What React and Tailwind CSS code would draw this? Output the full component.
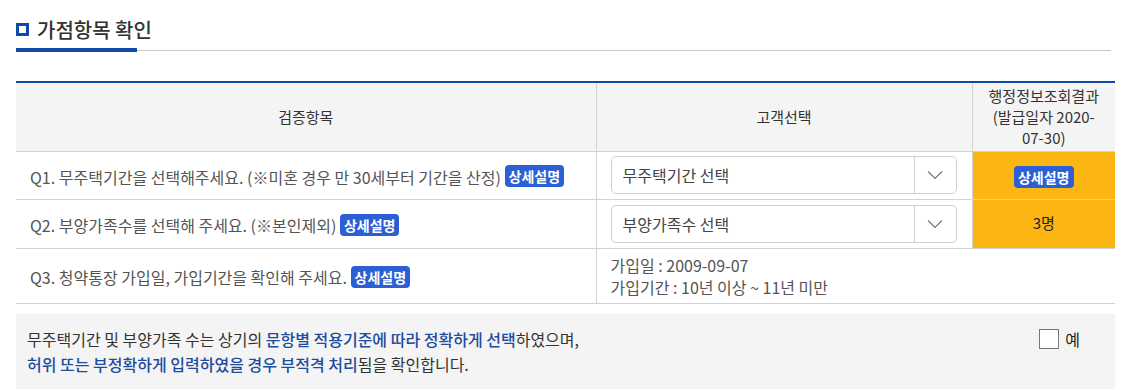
import React from 'react';

const font = { fontFamily: '"Noto Sans CJK KR", "Noto Sans", sans-serif' };

const Badge = () => (
  <span className="inline-flex items-center h-[22px] px-[4px] rounded-[4px] bg-[#2b5fd3] text-white text-[14px] font-bold leading-none align-middle">
    상세설명
  </span>
);

const ChevronDown = () => (
  <svg width="16" height="10" viewBox="0 0 16 10" fill="none">
    <path d="M1 1.5 L8 8.5 L15 1.5" stroke="#777" strokeWidth="1.2" />
  </svg>
);

const SelectBox = ({ label }) => (
  <div className="flex items-center h-[38px] w-[346px] border border-[#cfcfcf] rounded-[5px] bg-white">
    <span className="flex-1 pl-[11px] text-[16px] text-[#444]">{label}</span>
    <span className="flex items-center justify-center w-[42px] h-full border-l border-[#cfcfcf]">
      <ChevronDown />
    </span>
  </div>
);

const Blue = ({ children }) => <span className="text-[#1d4c9f] font-medium">{children}</span>;

export default function App() {
  return (
    <div className="bg-white w-[1127px] h-[390px] overflow-hidden px-4 text-[#555]" style={font}>
      {/* 제목 */}
      <div className="flex items-center gap-[8px] pt-[15px] h-[44px]">
        <span className="w-[13px] h-[13px] border-[3px] border-[#0d4aa9]" />
        <h2 className="text-[20px] font-medium text-[#333] leading-none">가점항목 확인</h2>
      </div>
      <div className="flex items-center h-[4px] mt-[4px]">
        <div className="w-[121px] h-[4px] bg-[#0d4aa9]" />
        <div className="flex-1 h-px bg-[#c8c8c8]" />
      </div>

      {/* 표 */}
      <table className="mt-[29px] w-[1099px] border-collapse border-t-2 border-[#0d4aa9] text-[16px] table-fixed">
        <colgroup>
          <col className="w-[580px]" />
          <col className="w-[376px]" />
          <col className="w-[143px]" />
        </colgroup>
        <thead>
          <tr className="bg-[#f4f4f4] h-[69px] text-[#333] text-[15px]">
            <th className="font-normal border-r border-b border-[#d2d2d2]">검증항목</th>
            <th className="font-normal border-r border-b border-[#d2d2d2]">고객선택</th>
            <th className="font-normal border-b border-[#d2d2d2] leading-[21px] px-[10px]">
              행정정보조회결과 (발급일자 2020-07-30)
            </th>
          </tr>
        </thead>
        <tbody>
          <tr className="h-[48px]">
            <td className="pl-[14px] border-r border-b border-[#d2d2d2]">
              <span className="align-middle">Q1. 무주택기간을 선택해주세요. (※미혼 경우 만 30세부터 기간을 산정)</span>{' '}
              <Badge />
            </td>
            <td className="pl-[14px] border-r border-b border-[#d2d2d2]">
              <SelectBox label="무주택기간 선택" />
            </td>
            <td className="bg-[#fbb614] border-b border-[#d2d2d2] text-center">
              <Badge />
            </td>
          </tr>
          <tr className="h-[49px]">
            <td className="pl-[14px] border-r border-b border-[#d2d2d2]">
              <span className="align-middle">Q2. 부양가족수를 선택해 주세요. (※본인제외)</span> <Badge />
            </td>
            <td className="pl-[14px] border-r border-b border-[#d2d2d2]">
              <SelectBox label="부양가족수 선택" />
            </td>
            <td className="bg-[#fbb614] border-b border-[#d2d2d2] text-center text-[#222] text-[15px]">3명</td>
          </tr>
          <tr className="h-[55px]">
            <td className="pl-[14px] border-r border-b border-[#d2d2d2]">
              <span className="align-middle">Q3. 청약통장 가입일, 가입기간을 확인해 주세요.</span> <Badge />
            </td>
            <td colSpan={2} className="pl-[14px] border-b border-[#d2d2d2] leading-[22px]">
              <div>가입일 : 2009-09-07</div>
              <div>가입기간 : 10년 이상 ~ 11년 미만</div>
            </td>
          </tr>
        </tbody>
      </table>

      {/* 확인 문구 */}
      <div className="mt-[10px] w-[1099px] bg-[#f4f4f4] flex justify-between pl-[11px] pr-[35px] pt-[13px] pb-[12px] text-[16px] leading-[25px] text-[#333]">
        <p>
          무주택기간 및 부양가족 수는 상기의 <Blue>문항별 적용기준에 따라 정확하게 선택</Blue>하였으며,
          <br />
          <Blue>허위 또는 부정확하게 입력하였을 경우 부적격 처리</Blue>됨을 확인합니다.
        </p>
        <label className="flex items-start gap-[6px] pt-[2px]">
          <span className="w-[20px] h-[20px] border border-[#777] bg-white" />
          <span className="leading-[20px] text-[#222]">예</span>
        </label>
      </div>
    </div>
  );
}
